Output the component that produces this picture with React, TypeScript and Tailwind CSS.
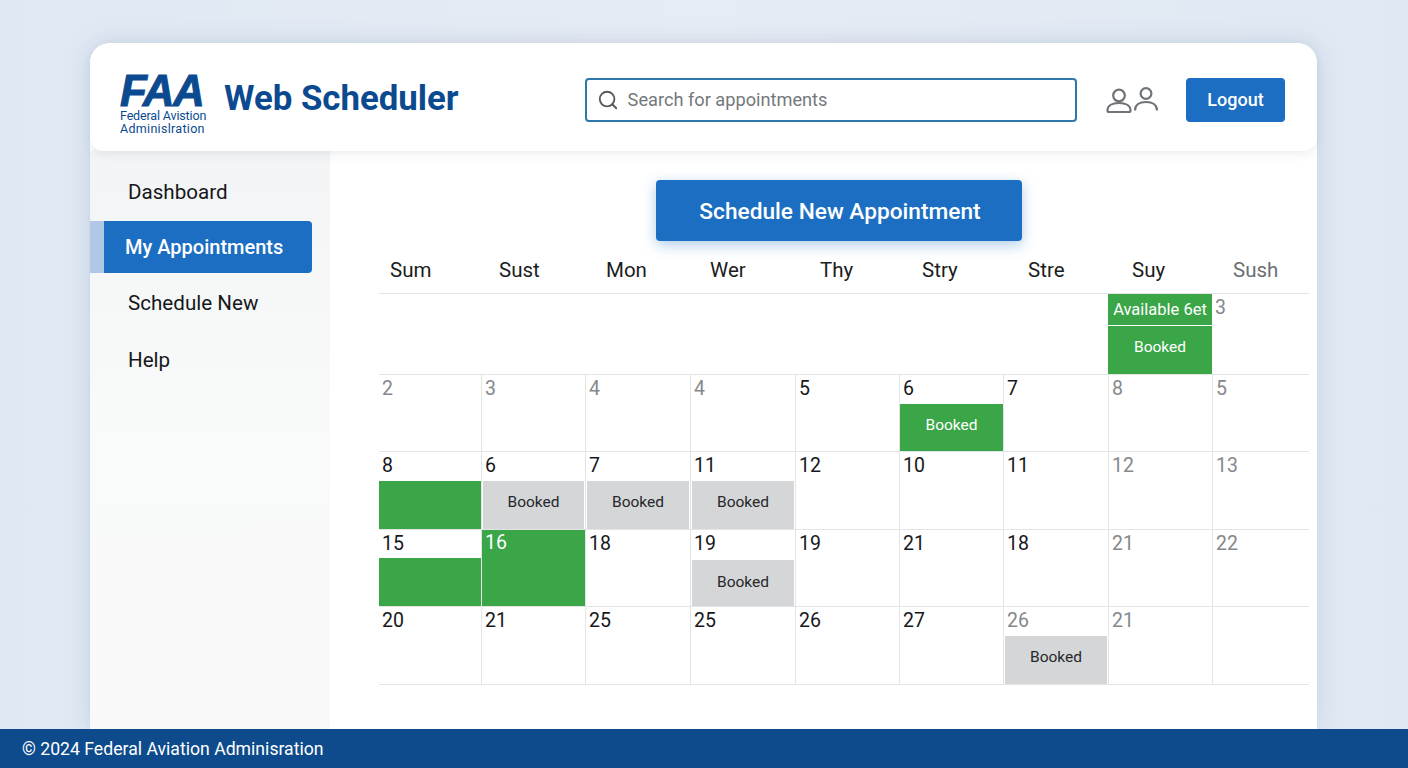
import React from "react";
import { Search } from "lucide-react";

type Cell = {
  n?: string;
  gray?: boolean;
  centered?: boolean;
  kind?: "green" | "greenBlank" | "gray" | "full" | "avail";
};

const rows: { h: string; cells: Cell[] }[] = [
  {
    h: "h-[81px]",
    cells: [{}, {}, {}, {}, {}, {}, {}, { kind: "avail" }, { n: "3", gray: true }],
  },
  {
    h: "h-[77px]",
    cells: [
      { n: "2", gray: true },
      { n: "3", gray: true },
      { n: "4", gray: true },
      { n: "4", gray: true },
      { n: "5" },
      { n: "6", kind: "green" },
      { n: "7" },
      { n: "8", gray: true },
      { n: "5", gray: true },
    ],
  },
  {
    h: "h-[78px]",
    cells: [
      { n: "8", kind: "greenBlank" },
      { n: "6", kind: "gray" },
      { n: "7", kind: "gray" },
      { n: "11", kind: "gray" },
      { n: "12" },
      { n: "10" },
      { n: "11" },
      { n: "12", gray: true },
      { n: "13", gray: true },
    ],
  },
  {
    h: "h-[77px]",
    cells: [
      { n: "15", kind: "greenBlank" },
      { n: "16", kind: "full" },
      { n: "18" },
      { n: "19", kind: "gray", centered: true },
      { n: "19" },
      { n: "21" },
      { n: "18" },
      { n: "21", gray: true },
      { n: "22", gray: true },
    ],
  },
  {
    h: "h-[78px]",
    cells: [
      { n: "20" },
      { n: "21" },
      { n: "25" },
      { n: "25" },
      { n: "26" },
      { n: "27" },
      { n: "26", gray: true, kind: "gray" },
      { n: "21", gray: true },
      {},
    ],
  },
];

const days = ["Sum", "Sust", "Mon", "Wer", "Thy", "Stry", "Stre", "Suy", "Sush"];

function CalCell({ c, first, row0 }: { c: Cell; first: boolean; row0: boolean }) {
  const edge = first || row0 ? "" : "border-l border-[#e2e4e6]";
  if (c.kind === "avail") {
    return (
      <div className="flex flex-col bg-white">
        <div className="h-[31px] pt-[2px] bg-[#3aa648] text-white text-[16.5px] flex items-center justify-center whitespace-nowrap">
          Available 6et
        </div>
        <div className="mt-[1px] flex-1 pb-[5px] bg-[#3aa648] text-white text-[15.5px] flex items-center justify-center">
          Booked
        </div>
      </div>
    );
  }
  if (c.kind === "full") {
    return (
      <div className={`${edge} bg-[#3aa648] text-white text-[19.5px] pl-[3px] pt-[1px] leading-[24px]`}>
        {c.n}
      </div>
    );
  }
  const num = c.n ? (
    <div
      className={`text-[19.5px] leading-[24px] pl-[3px] pt-[2px] ${c.gray ? "text-[#85888c]" : "text-[#16181b]"}`}
    >
      {c.n}
    </div>
  ) : null;
  return (
    <div className={`${edge} flex flex-col`}>
      {num}
      {c.kind === "green" && (
        <div className="mt-auto h-[47px] pb-[3px] bg-[#3aa648] text-white text-[15.5px] flex items-center justify-center">
          Booked
        </div>
      )}
      {c.kind === "greenBlank" && <div className="mt-auto h-[48px] bg-[#3aa648]" />}
      {c.kind === "gray" && (
        <div
          className={`mt-auto mx-[1px] bg-[#d5d6d8] text-[#26282b] text-[15.5px] flex items-center justify-center ${
            c.centered ? "h-[46px]" : "h-[48px] pb-[5px]"
          }`}
        >
          Booked
        </div>
      )}
    </div>
  );
}

function Users() {
  return (
    <svg width="56" height="30" viewBox="0 0 56 30" fill="none" stroke="#6f7377" strokeWidth="2.2">
      <circle cx="16" cy="10.5" r="5.8" />
      <path d="M4.5 25.5c0-5 4.8-7.5 11.5-7.5s11.5 2.5 11.5 7.5c0 .8-.6 1.5-1.5 1.5H6c-.9 0-1.5-.7-1.5-1.5z" />
      <circle cx="43" cy="8.5" r="5.4" />
      <path d="M32 25.5c0-5.5 4.5-8.5 11-8.5s11 3 11 8.5" />
    </svg>
  );
}

export default function App() {
  return (
    <div className="h-screen w-full flex flex-col overflow-hidden bg-gradient-to-r from-[#dfe8f3] via-[#e6ecf4] to-[#dfe8f3] font-['Roboto',sans-serif]">
      <div className="flex-1 min-h-0 pt-[43px] pl-[90px] pr-[91px]">
        <div className="h-full flex flex-col rounded-t-[20px] bg-white shadow-[0_0_24px_rgba(90,120,160,0.18)]">
          <header className="relative z-10 h-[108px] shrink-0 flex items-center bg-white rounded-t-[20px] rounded-b-[14px] shadow-[0_3px_10px_rgba(60,80,110,0.10)] pl-[30px] pr-[32px]">
            <div className="w-[87px] flex flex-col text-[#0b4a8f] mt-[14px]">
              <div className="font-['Liberation_Sans',sans-serif] font-bold italic text-[44px] leading-[36px] tracking-[-1.6px] h-[35px] [-webkit-text-stroke:1px_#0b4a8f]">
                FAA
              </div>
              <div className="text-[12.5px] leading-[13px] mt-[1px] whitespace-nowrap tracking-[-0.15px]">
                Federal Avistion
                <br />
                <span className="tracking-[0.3px]">Adminislration</span>
              </div>
            </div>
            <div className="ml-[17px] mt-[2px] text-[#0b4a8f] text-[34.8px] font-bold whitespace-nowrap">
              Web Scheduler
            </div>
            <div className="ml-[126px] w-[492px] h-[44px] flex items-center rounded-[4px] border-2 border-[#2f78ac] pl-[10px] gap-[9px] mt-[5px]">
              <Search size={22} color="#55595d" strokeWidth={2} />
              <span className="text-[18.2px] text-[#74787c]">Search for appointments</span>
            </div>
            <div className="ml-[26px] mt-[5px]">
              <Users />
            </div>
            <button className="ml-auto w-[99px] h-[44px] rounded-[4px] bg-[#1b6ec2] text-white text-[18px] font-medium mt-[5px]">
              Logout
            </button>
          </header>
          <div className="flex-1 min-h-0 flex">
            <aside className="w-[240px] shrink-0 bg-gradient-to-b from-[#f3f4f5] via-[#f9fafa] to-[#f9f9f9] shadow-[2px_0_8px_rgba(60,80,110,0.08)] pt-[13px]">
              <div className="h-[57px] flex items-center pl-[38px] text-[20.6px] text-[#15171a]">Dashboard</div>
              <div className="h-[52px] flex pr-[18px]">
                <div className="w-[14px] bg-[#b1c8e4]" />
                <div className="flex-1 flex items-center pl-[21px] bg-[#1b6ec2] rounded-r-[4px] text-white text-[20px] font-medium whitespace-nowrap">
                  My Appointments
                </div>
              </div>
              <div className="h-[60px] flex items-center pl-[38px] text-[20.6px] text-[#15171a]">Schedule New</div>
              <div className="h-[54px] flex items-center pl-[38px] text-[20.6px] text-[#15171a]">Help</div>
            </aside>
            <main className="flex-1 min-w-0 bg-white pl-[49px] pr-[8px] pt-[29px]">
              <div className="flex justify-center pr-[11px]">
                <button className="w-[366px] h-[61px] pl-[3px] pt-[3px] rounded-[4px] bg-[#1b6ec2] text-white text-[22.7px] font-medium shadow-[0_4px_14px_rgba(27,110,194,0.35)]">
                  Schedule New Appointment
                </button>
              </div>
              <div className="h-[53px] pt-[7px] grid grid-cols-[109px_107px_104px_110px_102px_106px_104px_101px_1fr] items-center pl-[11px] text-[20.5px] text-[#1b1d20] border-b border-[#e2e4e6]">
                {days.map((d) => (
                  <span key={d} className={d === "Sush" ? "text-[#6b6f73]" : ""}>
                    {d}
                  </span>
                ))}
              </div>
              {rows.map((r, i) => (
                <div
                  key={i}
                  className={`${r.h} grid grid-cols-[102px_104px_105px_105px_104px_104px_105px_104px_97px] border-b border-[#e2e4e6]`}
                >
                  {r.cells.map((c, j) => (
                    <CalCell key={j} c={c} first={j === 0} row0={i === 0} />
                  ))}
                </div>
              ))}
            </main>
          </div>
        </div>
      </div>
      <footer className="relative z-20 h-[39px] shrink-0 flex items-center pl-[22px] pt-[1px] bg-[#0d4b8c] text-white text-[17.65px]">
        © 2024 Federal Aviation Adminisration
      </footer>
    </div>
  );
}
